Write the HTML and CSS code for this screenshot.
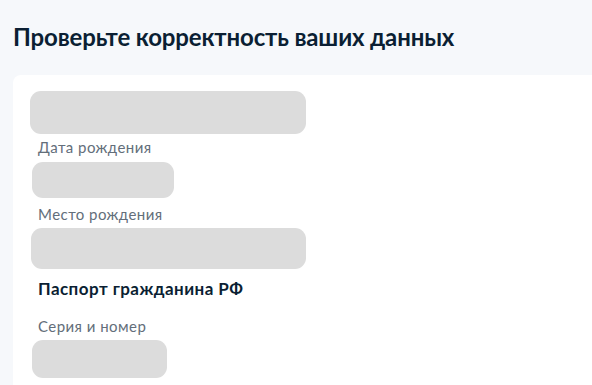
FILE: index.html
```html
<!DOCTYPE html>
<html lang="ru">
<head>
<meta charset="utf-8">
<link rel="stylesheet" href="styles.css">
</head>
<body>
<div class="page">
  <h1 class="title">Проверьте корректность ваших данных</h1>
  <div class="card">
    <div class="blk blk-name"></div>
    <div class="label l-date">Дата рождения</div>
    <div class="blk blk-date"></div>
    <div class="label l-place">Место рождения</div>
    <div class="blk blk-place"></div>
    <div class="section">Паспорт гражданина РФ</div>
    <div class="label l-series">Серия и номер</div>
    <div class="blk blk-series"></div>
  </div>
</div>
</body>
</html>
```

FILE: styles.css
```css
html, body {
  margin: 0;
  padding: 0;
  height: 100%;
  background: #f6f8fb;
  font-family: Lato, "Noto Sans", sans-serif;
  overflow: hidden;
}
.page {
  padding: 0 0 0 13px;
  height: 100%;
  display: flex;
  flex-direction: column;
}
.title {
  margin: 0 0 24px 0;
  padding-top: 23px;
  font-size: 24px;
  letter-spacing: -0.15px;
  font-weight: 700;
  color: #0b1f33;
  line-height: 28px;
}
.card {
  flex: 1;
  background: #fff;
  border-radius: 8px 0 0 0;
  padding: 16px 0 0 17px;
  display: flex;
  flex-direction: column;
  align-items: flex-start;
}
.blk {
  background: #dcdcdc;
  border-radius: 11px;
  flex: none;
}
.blk-name { width: 276px; height: 43px; }
.label {
  font-size: 15px;
  letter-spacing: 0.45px;
  color: #636e7a;
  line-height: 18px;
  margin-left: 8px;
}
.l-date { margin-top: 4px; }
.blk-date { width: 142px; height: 36px; margin-left: 2px; margin-top: 6px; }
.l-place { margin-top: 7px; }
.blk-place { width: 275px; height: 41px; margin-left: 1px; margin-top: 5px; }
.section {
  font-size: 17px;
  font-weight: 700;
  letter-spacing: 0.45px;
  color: #0b1f33;
  margin-left: 8px;
  margin-top: 10px;
  line-height: 20px;
}
.l-series { margin-top: 18px; }
.blk-series { width: 135px; height: 38px; margin-left: 2px; margin-top: 5px; }
```
